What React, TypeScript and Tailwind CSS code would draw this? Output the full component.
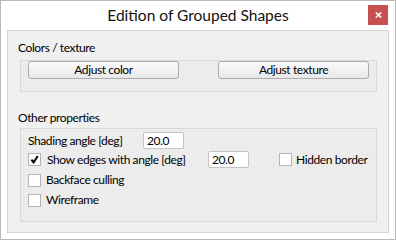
import React from 'react';

const FONT = { fontFamily: 'Lato, "Noto Sans", sans-serif' };

const CheckBox: React.FC<{ checked?: boolean }> = ({ checked }) => (
  <span className="flex h-[13px] w-[13px] shrink-0 items-center justify-center border border-[#b4b4b4] bg-white">
    {checked && (
      <svg width="9" height="9" viewBox="0 0 9 9">
        <path d="M1.4 4.6 L3.6 7.4 L7.8 1" fill="none" stroke="#000" strokeWidth="2" />
      </svg>
    )}
  </span>
);

const NumberBox: React.FC<{ value: string }> = ({ value }) => (
  <span className="flex h-[17px] w-[41px] shrink-0 items-center rounded-[2px] border border-[#c4c4c4] bg-white pl-[3px]">
    {value}
  </span>
);

const PushButton: React.FC<{ label: string }> = ({ label }) => (
  <button
    type="button"
    className="flex h-[18px] w-[151px] items-center justify-center rounded-[3px] border border-[#acacac] bg-linear-to-b from-[#fbfbfb] to-[#e8e8e8] text-black"
  >
    {label}
  </button>
);

const GroupBox: React.FC<{ title: string; className: string; children: React.ReactNode }> = ({
  title,
  className,
  children
}) => (
  <div>
    <div className="ml-[10px] h-[16px] leading-[16px] text-black">{title}</div>
    <div className={`ml-[12px] mr-[11px] border border-[#d9d9d9] bg-[#ececec] ${className}`}>
      {children}
    </div>
  </div>
);

export default function App() {
  return (
    <div
      className="flex h-[240px] w-[396px] flex-col whitespace-nowrap border border-[#b9b9b9] bg-white text-black"
      style={FONT}
    >
      <div className="relative flex h-[29px] shrink-0 items-center justify-center">
        <span className="mb-[1px] text-[15.5px] leading-[20px] text-[#111]">Edition of Grouped Shapes</span>
        <span className="absolute right-[7px] top-[4px] flex h-[20px] w-[20px] items-center justify-center bg-[#c75050]">
          <svg width="7" height="6" viewBox="0 0 7 6">
            <path d="M0.8 0.5 L6.2 5.5 M6.2 0.5 L0.8 5.5" stroke="#fff" strokeWidth="1.6" />
          </svg>
        </span>
      </div>

      <div className="mx-[6px] h-[203px] shrink-0 border border-[#d4d4d4] bg-[#f0f0f0] pt-[9px] text-[12px] tracking-[-0.4px]">
        <GroupBox title="Colors / texture" className="mt-[4px] h-[32px] pl-[7px]">
          <div className="flex">
            <PushButton label="Adjust color" />
            <div className="ml-[39px]">
              <PushButton label="Adjust texture" />
            </div>
          </div>
        </GroupBox>

        <div className="mt-[18px]">
          <GroupBox title="Other properties" className="mt-[2px] h-[94px] pl-[7px] pt-[3px]">
            <div className="flex h-[17px] items-center">
              <span className="w-[115px]">Shading angle [deg]</span>
              <NumberBox value="20.0" />
            </div>
            <div className="mt-[2px] flex h-[17px] items-center">
              <span className="flex w-[180px] items-center gap-[6px]">
                <CheckBox checked />
                <span>Show edges with angle [deg]</span>
              </span>
              <NumberBox value="20.0" />
              <span className="ml-[30px] flex items-center gap-[4px]">
                <CheckBox />
                <span>Hidden border</span>
              </span>
            </div>
            <div className="mt-[2px] flex h-[20px] items-center gap-[5px]">
              <CheckBox />
              <span>Backface culling</span>
            </div>
            <div className="flex h-[20px] items-center gap-[5px]">
              <CheckBox />
              <span>Wireframe</span>
            </div>
          </GroupBox>
        </div>
      </div>
    </div>
  );
}
